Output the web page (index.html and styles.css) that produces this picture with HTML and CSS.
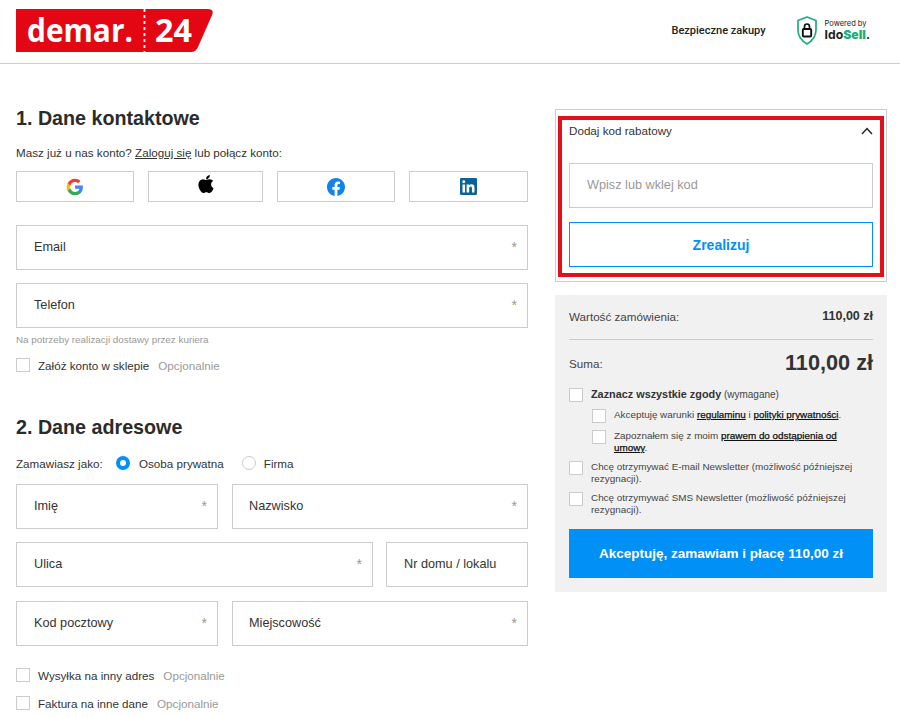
FILE: index.html
```html
<!DOCTYPE html>
<html lang="pl">
<head>
<meta charset="utf-8">
<title>Demar24</title>
<link rel="stylesheet" href="styles.css">
</head>
<body>
<header class="topbar">
  <svg class="logo" viewBox="0 0 197 43" width="197" height="43">
    <path d="M0 0H191Q198 0 196.500 5L182 38Q180 43 175 43H0Z" fill="#e30613"/>
    <line x1="128.500" y1="0" x2="128.500" y2="43" stroke="#fff" stroke-width="1.800" stroke-dasharray="3 3"/>
    <text x="11" y="33" class="logo-word" textLength="106" lengthAdjust="spacingAndGlyphs">demar.</text>
    <text x="139" y="33" class="logo-num" textLength="37" lengthAdjust="spacingAndGlyphs">24</text>
  </svg>
  <div class="topbar-right">
    <span class="secure">Bezpieczne zakupy</span>
    <div class="idosell">
      <svg width="20" height="29" viewBox="0 0 20 29">
        <path d="M10 1L19 4.500V14C19 20 15 25 10 28C5 25 1 20 1 14V4.500Z" fill="none" stroke="#1cae76" stroke-width="1.700" stroke-linejoin="round"/>
        <rect x="5.800" y="13" width="8.400" height="7.500" rx="1" fill="none" stroke="#111" stroke-width="1.900"/>
        <path d="M7.500 13V10.500a2.500 2.500 0 0 1 5 0V13" fill="none" stroke="#111" stroke-width="1.700"/>
      </svg>
      <div class="ido-text">
        <span class="ido-pow">Powered by</span>
        <span class="ido-name">Ido<b>Sell</b>.</span>
      </div>
    </div>
  </div>
</header>

<main class="page">
  <section class="left">
    <h2 class="title first">1. Dane kontaktowe</h2>
    <p class="login">Masz już u nas konto? <a href="#">Zaloguj się</a> lub połącz konto:</p>
    <div class="socials">
      <button class="social"><svg width="18" height="18" viewBox="0 0 24 24"><path fill="#4285F4" d="M22.56 12.25c0-.78-.07-1.53-.2-2.25H12v4.26h5.92c-.26 1.37-1.04 2.53-2.21 3.31v2.77h3.57c2.08-1.92 3.28-4.74 3.28-8.09z"/><path fill="#34A853" d="M12 23c2.970 0 5.460-.98 7.280-2.660l-3.570-2.770c-.98.66-2.230 1.060-3.710 1.060-2.860 0-5.290-1.930-6.160-4.530H2.180v2.840C3.990 20.530 7.700 23 12 23z"/><path fill="#FBBC05" d="M5.840 14.090c-.22-.66-.35-1.360-.35-2.090s.13-1.430.35-2.090V7.070H2.180C1.430 8.550 1 10.220 1 12s.43 3.450 1.180 4.930l2.850-2.220.81-.62z"/><path fill="#EA4335" d="M12 5.380c1.620 0 3.060.56 4.210 1.640l3.150-3.150C17.450 2.090 14.970 1 12 1 7.700 1 3.990 3.470 2.180 7.070l3.660 2.840c.87-2.600 3.300-4.530 6.160-4.530z"/></svg></button>
      <button class="social"><svg class="raise" width="24" height="24" viewBox="0 0 24 24"><path fill="#000" d="M17.050 20.280c-.98.95-2.050.8-3.080.35-1.090-.46-2.090-.48-3.240 0-1.440.62-2.200.44-3.060-.35C2.790 15.250 3.510 7.590 9.050 7.310c1.350.07 2.290.74 3.080.8 1.180-.24 2.310-.93 3.570-.84 1.510.12 2.650.72 3.400 1.800-3.120 1.870-2.380 5.980.48 7.130-.57 1.500-1.310 2.990-2.540 4.090zM12.030 7.250c-.15-2.230 1.660-4.070 3.740-4.250.29 2.580-2.340 4.500-3.740 4.250z"/></svg></button>
      <button class="social"><svg width="18" height="18" viewBox="0 0 24 24"><path fill="#1283ea" d="M24 12.070C24 5.400 18.630 0 12 0S0 5.400 0 12.070c0 6.030 4.390 11.020 10.130 11.930v-8.440H7.080v-3.490h3.050V9.410c0-3.020 1.790-4.690 4.530-4.690 1.310 0 2.680.23 2.680.23v2.970h-1.510c-1.490 0-1.950.93-1.950 1.880v2.270h3.330l-.53 3.490h-2.800V24C19.610 23.090 24 18.100 24 12.070z"/></svg></button>
      <button class="social"><svg width="17" height="17" viewBox="0 0 24 24"><path fill="#0a6398" fill-rule="evenodd" d="M20.450 20.450h-3.550v-5.570c0-1.330-.03-3.040-1.850-3.040-1.850 0-2.140 1.450-2.140 2.940v5.670H9.350V9h3.410v1.560h.05c.48-.9 1.640-1.850 3.370-1.850 3.600 0 4.270 2.370 4.270 5.460v6.280zM5.340 7.430a2.060 2.060 0 1 1 0-4.120 2.060 2.060 0 0 1 0 4.120zM7.120 20.450H3.560V9h3.560v11.450zM22.220 0H1.770C.79 0 0 .77 0 1.730v20.540C0 23.230.79 24 1.770 24h20.450c.98 0 1.780-.77 1.780-1.730V1.730C24 .77 23.200 0 22.220 0z"/></svg></button>
    </div>
    <div class="field wide-top"><span>Email</span><i>*</i></div>
    <div class="field gap"><span>Telefon</span><i>*</i></div>
    <p class="hint">Na potrzeby realizacji dostawy przez kuriera</p>
    <label class="check-line first-check"><span class="box"></span><span class="check-label">Załóż konto w sklepie</span><span class="opt">Opcjonalnie</span></label>

    <h2 class="title second">2. Dane adresowe</h2>
    <div class="as">
      <span class="as-label">Zamawiasz jako:</span>
      <span class="radio on"></span><span class="radio-label">Osoba prywatna</span>
      <span class="radio"></span><span class="radio-label">Firma</span>
    </div>
    <div class="row r1 first-row">
      <div class="field"><span>Imię</span><i>*</i></div>
      <div class="field"><span>Nazwisko</span><i>*</i></div>
    </div>
    <div class="row r2">
      <div class="field"><span>Ulica</span><i>*</i></div>
      <div class="field"><span>Nr domu / lokalu</span></div>
    </div>
    <div class="row r1 third-row">
      <div class="field"><span>Kod pocztowy</span><i>*</i></div>
      <div class="field"><span>Miejscowość</span><i>*</i></div>
    </div>
    <label class="check-line ship"><span class="box"></span><span class="check-label">Wysyłka na inny adres</span><span class="opt">Opcjonalnie</span></label>
    <label class="check-line invoice"><span class="box"></span><span class="check-label">Faktura na inne dane</span><span class="opt">Opcjonalnie</span></label>
  </section>

  <aside class="right">
    <div class="coupon">
      <div class="mark"></div>
      <div class="coupon-head">
        <span>Dodaj kod rabatowy</span>
        <svg width="12" height="8" viewBox="0 0 12 8"><path d="M1 7L6 1.500L11 7" fill="none" stroke="#222" stroke-width="1.400"/></svg>
      </div>
      <div class="coupon-input">Wpisz lub wklej kod</div>
      <button class="redeem">Zrealizuj</button>
    </div>
    <div class="summary">
      <div class="sum-row value"><span>Wartość zamówienia:</span><b>110,00 zł</b></div>
      <div class="sum-row total"><span>Suma:</span><b>110,00 zł</b></div>
      <div class="agree all"><span class="box"></span><p><b>Zaznacz wszystkie zgody</b> <span class="req">(wymagane)</span></p></div>
      <div class="agree sub"><span class="box"></span><p>Akceptuję warunki <a href="#">regulaminu</a> i <a href="#">polityki prywatności</a>.</p></div>
      <div class="agree sub"><span class="box"></span><p>Zapoznałem się z moim <a href="#">prawem do odstąpienia od umowy</a>.</p></div>
      <div class="agree news"><span class="box"></span><p>Chcę otrzymywać E-mail Newsletter (możliwość późniejszej rezygnacji).</p></div>
      <div class="agree news"><span class="box"></span><p>Chcę otrzymywać SMS Newsletter (możliwość późniejszej rezygnacji).</p></div>
      <button class="pay">Akceptuję, zamawiam i płacę 110,00 zł</button>
    </div>
  </aside>
</main>
</body>
</html>
```
FILE: styles.css
```css
* { box-sizing: border-box; }
html, body { margin: 0; padding: 0; }
body {
  font-family: "Liberation Sans", Arial, sans-serif;
  color: #333;
  background: #fff;
  font-size: 11.650px;
  height: 717px;
  overflow: hidden;
}
button { font-family: inherit; cursor: pointer; }
a { color: #222; }

.topbar {
  height: 64px;
  border-bottom: 1px solid #ccc;
  display: flex;
  align-items: flex-start;
  justify-content: space-between;
  padding: 9px 30px 0 16px;
}
.logo { display: block; overflow: visible; }
.logo-word { font-family: "Open Sans", sans-serif; font-weight: 700; font-size: 33px; fill: #fff; }
.logo-num { font-family: "Open Sans", sans-serif; font-weight: 700; font-size: 32px; fill: #fff; }
.topbar-right { display: flex; align-items: center; gap: 31px; margin-top: 7px; }
.secure { font-family: Roboto, sans-serif; font-weight: 500; font-size: 11px; color: #222; margin-top: -1px; }
.idosell { display: flex; align-items: center; gap: 8px; }
.ido-text { display: flex; flex-direction: column; font-family: Inter, sans-serif; color: #222; }
.ido-pow { font-size: 7.500px; line-height: 9px; }
.ido-name { font-size: 12.200px; font-weight: 700; line-height: 14px; }
.ido-name b { color: #1cae76; }

.page {
  display: flex;
  justify-content: space-between;
  padding: 0 13px 0 16px;
}
.left { width: 512px; }
.right { width: 332px; padding-top: 45px; }

.title { margin: 0; font-size: 19.700px; line-height: 24px; font-weight: 700; color: #2b2b2b; }
.title.first { margin-top: 42px; }
.title.second { margin-top: 42px; }
.login { margin: 16px 0 0; line-height: 14px; color: #333; }
.login a { color: #333; }
.socials {
  display: grid;
  grid-template-columns: 118fr 115fr 118fr 119fr;
  column-gap: 14px;
  margin-top: 11px;
}
.social {
  height: 31px;
  background: #fff;
  border: 1px solid #ccc;
  padding: 0;
  display: flex;
  align-items: center;
  justify-content: center;
}
.raise { position: relative; top: -3px; }

.field {
  height: 45px;
  border: 1px solid #ccc;
  display: flex;
  align-items: center;
  justify-content: space-between;
  padding: 0 10px 2px 17px;
  font-size: 12.700px;
  color: #333;
}
.field i { font-style: normal; color: #999; font-size: 14px; }
.r1 .field:last-child { padding-left: 16px; }
.wide-top { margin-top: 23px; }
.gap { margin-top: 13px; }
.hint { margin: 6px 0 0; font-size: 9.850px; line-height: 12px; color: #999; }

.check-line { display: flex; align-items: center; height: 16px; }
.box {
  flex: none;
  display: block;
  width: 14px;
  height: 14px;
  background: #fff;
  border: 1px solid #ccc;
}
.check-label { margin-left: 8px; color: #333; }
.opt { margin-left: 9px; color: #999; }
.first-check { margin-top: 11px; }
.ship { margin-top: 21px; }
.invoice { margin-top: 12px; }

.as { display: flex; align-items: center; margin-top: 16px; height: 16px; }
.as-label { width: 100px; }
.radio {
  width: 14px;
  height: 14px;
  border-radius: 50%;
  border: 1px solid #ccc;
  background: #fff;
  margin-right: 8px;
}
.radio.on { border: 4px solid #0090f6; margin-right: 9px; }
.radio-label { margin-right: 18px; color: #333; }

.row { display: grid; column-gap: 14px; margin-top: 13px; }
.first-row { margin-top: 13px; }
.third-row { margin-top: 14px; }
.r1 { grid-template-columns: 202px 1fr; }
.r2 { grid-template-columns: 357px 1fr; column-gap: 13px; }

.coupon {
  position: relative;
  height: 173px;
  border: 1px solid #ccc;
  padding: 0 13px;
}
.mark {
  position: absolute;
  left: 2px; top: 6px;
  width: 326px;
  height: 161px;
  border: 4px solid #e2101a;
  pointer-events: none;
}
.coupon-head {
  display: flex;
  align-items: center;
  justify-content: space-between;
  padding-top: 13px;
  height: 28px;
  color: #333;
}
.coupon-input {
  margin-top: 25px;
  height: 45px;
  border: 1px solid #ccc;
  display: flex;
  align-items: center;
  padding: 0 0 2px 17px;
  font-size: 12.700px;
  color: #999;
}
.redeem {
  display: block;
  width: 100%;
  margin-top: 14px;
  height: 45px;
  background: #fff;
  border: 1px solid #0090f6;
  color: #0090f6;
  font-size: 14px;
  font-weight: 700;
}

.summary {
  margin-top: 13px;
  height: 297px;
  background: #f1f1f1;
  padding: 0 14px;
}
.sum-row { display: flex; justify-content: space-between; align-items: center; }
.value { height: 45px; padding-bottom: 2px; border-bottom: 1px solid #ccc; color: #444; }
.value b { color: #333; font-size: 12.500px; }
.total { height: 48px; padding-bottom: 2px; color: #444; }
.total b { font-size: 21.700px; color: #333; }
.agree { display: flex; }
.agree .box { margin-right: 8px; }
.agree p { margin: 0; font-size: 9.900px; line-height: 12px; color: #444; }
.agree a { color: #111; -webkit-text-stroke: .25px #111; }
.all p b { font-size: 10.850px; color: #333; }
.req { font-size: 10px; }
.sub { margin-left: 23px; margin-top: 7px; }
.sub p { padding-right: 20px; }
.news { margin-top: 7px; }
.pay {
  display: block;
  width: 100%;
  margin-top: 13px;
  height: 49px;
  background: #0090f6;
  color: #fff;
  border: 0;
  font-size: 13.500px;
  font-weight: 700;
}
```
